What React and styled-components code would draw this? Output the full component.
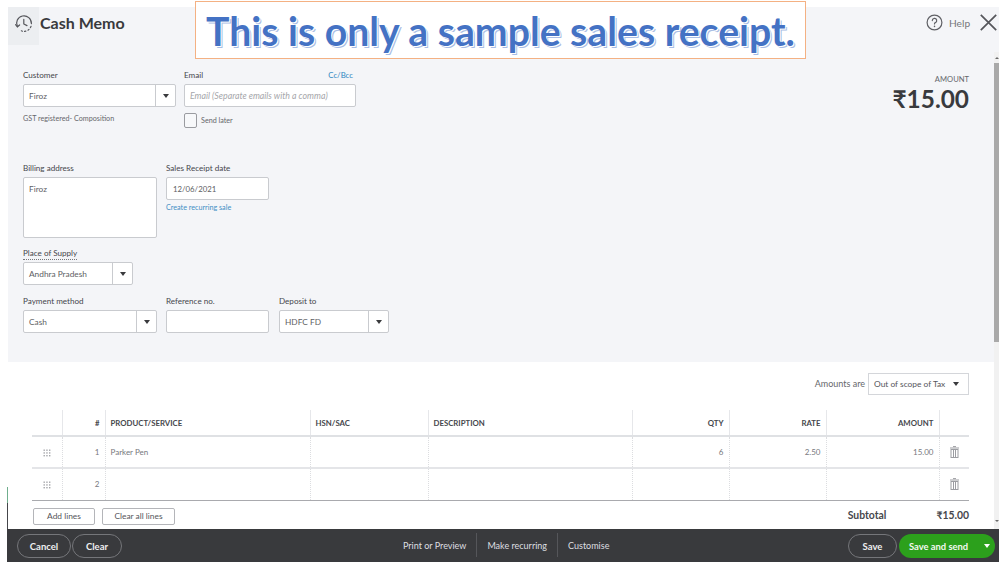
import React from 'react'
import styled, { createGlobalStyle } from 'styled-components'

const GlobalStyle = createGlobalStyle`
  html, body {
    margin: 0;
    padding: 0;
    background: #fff;
    overflow: hidden;
  }
  * {
    box-sizing: border-box;
  }
`

const columns = [30, 43, 205, 118, 204, 97, 97, 113, 30]

const HistoryIcon = () => (
  <svg width="20" height="20" viewBox="0 0 20 20" fill="none" stroke="#55565b" strokeWidth="1.2" strokeLinecap="round">
    <path d="M3.4 12.6 A7.4 7.4 0 1 1 17.4 9.6" />
    <path d="M1.6 10.6 L3.4 12.8 L5.6 11" />
    <path d="M9.8 5.4 V10 L13 11.6" />
    <path d="M17 12.4 L16.4 13.6 M15 15.4 L14 16.2 M11.8 17.2 L10.6 17.4 M8.4 17.2 L7.4 16.8" />
  </svg>
)

const HelpIcon = () => (
  <svg width="17" height="17" viewBox="0 0 17 17" fill="none" stroke="#5f6065" strokeWidth="1.2" strokeLinecap="round">
    <circle cx="8.5" cy="8.5" r="7.4" />
    <path d="M6.3 6.6 A2.2 2.2 0 1 1 9.3 8.6 C8.7 8.9 8.5 9.2 8.5 10" />
    <path d="M8.5 12.2 V12.4" strokeWidth="1.5" />
  </svg>
)

const CloseIcon = () => (
  <svg width="17" height="17" viewBox="0 0 17 17" fill="none" stroke="#55565b" strokeWidth="1.7">
    <path d="M0.8 0.8 L16.2 16.2 M16.2 0.8 L0.8 16.2" />
  </svg>
)

const GripIcon = () => (
  <svg width="8" height="8" viewBox="0 0 8 8" fill="#a4a5a9">
    {[0.5, 3.25, 6].map((y) =>
      [0.5, 3.25, 6].map((x) => <rect key={`${x}-${y}`} x={x} y={y} width="1.4" height="1.4" />)
    )}
  </svg>
)

const TrashIcon = () => (
  <svg width="9" height="12" viewBox="0 0 9 12" fill="none" stroke="#9c9da2" strokeWidth="1">
    <path d="M3 .6 H6 M0 2 H9" />
    <rect x="1" y="3.5" width="7" height="8" />
    <path d="M3.5 4 V11 M5.5 4 V11" />
  </svg>
)

const Select = ({ width, caretWidth = 20, height = 23, children }) => (
  <SelectBox $width={width} $height={height}>
    <SelectValue>{children}</SelectValue>
    <CaretCell $width={caretWidth}>
      <Caret />
    </CaretCell>
  </SelectBox>
)

const Row = ({ index, item, qty, rate, amount }) => (
  <tr>
    <BodyCell $align="center">
      <GripIcon />
    </BodyCell>
    <BodyCell $align="right">{index}</BodyCell>
    <BodyCell>{item}</BodyCell>
    <BodyCell />
    <BodyCell />
    <BodyCell $align="right">{qty}</BodyCell>
    <BodyCell $align="right">{rate}</BodyCell>
    <BodyCell $align="right">{amount}</BodyCell>
    <BodyCell $align="center">
      <TrashIcon />
    </BodyCell>
  </tr>
)

const App = () => (
  <Page>
    <GlobalStyle />
    <Banner>This is only a sample sales receipt.</Banner>
    <SideMark />
    <Scrollbar>
      <ScrollArrow />
      <ScrollThumb />
      <ScrollArrow $down />
    </Scrollbar>

    <Main>
      <FormPanel>
        <Header>
          <HeaderLeft>
            <HistoryButton>
              <HistoryIcon />
            </HistoryButton>
            <Title>Cash Memo</Title>
          </HeaderLeft>
          <HeaderRight>
            <HelpIcon />
            <HelpText>Help</HelpText>
            <CloseIcon />
          </HeaderRight>
        </Header>

        <FormBody>
          <Form>
            <FieldRow>
              <Field $width={153}>
                <Label>Customer</Label>
                <Select width={153}>Firoz</Select>
                <Hint>GST registered- Composition</Hint>
              </Field>
              <Field $width={172}>
                <LabelRow>
                  <Label>Email</Label>
                  <CcLink>Cc/Bcc</CcLink>
                </LabelRow>
                <Input $width={172} $placeholder>Email (Separate emails with a comma)</Input>
                <CheckRow>
                  <Checkbox />
                  <Hint as="span">Send later</Hint>
                </CheckRow>
              </Field>
            </FieldRow>

            <FieldRow $top={35} $gap={9}>
              <Field $width={134}>
                <Label>Billing address</Label>
                <Textarea>Firoz</Textarea>
              </Field>
              <Field $width={103}>
                <Label>Sales Receipt date</Label>
                <Input $width={103} $inset={6} $size={7.8}>12/06/2021</Input>
                <RecurringLink>Create recurring sale</RecurringLink>
              </Field>
            </FieldRow>

            <FieldRow $top={10}>
              <Field $width={110}>
                <Label $dotted>Place of Supply</Label>
                <Select width={110}>Andhra Pradesh</Select>
              </Field>
            </FieldRow>

            <FieldRow $top={11} $gap={9}>
              <Field $width={134}>
                <Label>Payment method</Label>
                <Select width={134}>Cash</Select>
              </Field>
              <Field $width={103}>
                <Label>Reference no.</Label>
                <Input $width={103} />
              </Field>
              <Field $width={110} $shift={1}>
                <Label>Deposit to</Label>
                <Select width={110}>HDFC FD</Select>
              </Field>
            </FieldRow>
          </Form>

          <AmountBlock>
            <AmountLabel>AMOUNT</AmountLabel>
            <AmountValue>₹15.00</AmountValue>
          </AmountBlock>
        </FormBody>
      </FormPanel>

      <LinesPanel>
        <TaxRow>
          <TaxLabel>Amounts are</TaxLabel>
          <TaxSelect>
            <span>Out of scope of Tax</span>
            <Caret />
          </TaxSelect>
        </TaxRow>

        <LinesTable>
          <colgroup>
            {columns.map((w, i) => (
              <col key={i} style={{ width: w }} />
            ))}
          </colgroup>
          <thead>
            <tr>
              <HeadCell />
              <HeadCell $align="right">#</HeadCell>
              <HeadCell>PRODUCT/SERVICE</HeadCell>
              <HeadCell>HSN/SAC</HeadCell>
              <HeadCell>DESCRIPTION</HeadCell>
              <HeadCell $align="right">QTY</HeadCell>
              <HeadCell $align="right">RATE</HeadCell>
              <HeadCell $align="right">AMOUNT</HeadCell>
              <HeadCell />
            </tr>
          </thead>
          <tbody>
            <Row index={1} item="Parker Pen" qty="6" rate="2.50" amount="15.00" />
            <Row index={2} />
          </tbody>
        </LinesTable>

        <LinesFooter>
          <LineButtons>
            <LineButton $width={62}>Add lines</LineButton>
            <LineButton $width={73}>Clear all lines</LineButton>
          </LineButtons>
          <Totals>
            <span>Subtotal</span>
            <span>₹15.00</span>
          </Totals>
        </LinesFooter>
      </LinesPanel>
    </Main>

    <Footer>
      <FooterGroup>
        <PillButton $width={54}>Cancel</PillButton>
        <PillButton $width={50}>Clear</PillButton>
      </FooterGroup>
      <FooterLinks>
        <FooterLink>Print or Preview</FooterLink>
        <FooterLink $divider>Make recurring</FooterLink>
        <FooterLink $divider>Customise</FooterLink>
      </FooterLinks>
      <FooterGroup $gap={2}>
        <PillButton $width={49}>Save</PillButton>
        <SendButton>
          <span>Save and send</span>
          <SendCaret />
        </SendButton>
      </FooterGroup>
    </Footer>
  </Page>
)

const Page = styled.div`
  position: relative;
  width: 999px;
  height: 562px;
  overflow: hidden;
  display: flex;
  flex-direction: column;
  padding-top: 7px;
  background: #fff;
  font-family: Lato, 'Liberation Sans', sans-serif;
  color: #4a4b50;
`

const Banner = styled.div`
  position: absolute;
  left: 195px;
  top: 1px;
  width: 611px;
  height: 58px;
  z-index: 3;
  display: flex;
  align-items: center;
  justify-content: center;
  background: #fff;
  border: 1px solid #f4b183;
  font-family: Lato, 'Liberation Sans', sans-serif;
  font-size: 39.2px;
  font-weight: 700;
  color: #4472c4;
  white-space: nowrap;
  text-shadow: 1px 1px 0 #fff, 2px 2px 0 #a9bde4;
`

const SideMark = styled.div`
  position: absolute;
  left: 7px;
  top: 487px;
  width: 1px;
  height: 42px;
  background: linear-gradient(#6fae8d 38%, #44454a 38%);
`

const Scrollbar = styled.div`
  position: absolute;
  right: 0;
  top: 52px;
  width: 5px;
  height: 477px;
  z-index: 2;
  display: flex;
  flex-direction: column;
  background: #f1f1f1;
`

const ScrollArrow = styled.div`
  height: 11px;
  flex: none;
  margin-top: ${(p) => (p.$down ? 'auto' : '0')};
  margin-bottom: ${(p) => (p.$down ? '3px' : '0')};
  display: flex;
  align-items: center;
  justify-content: center;

  &::after {
    content: '';
    border-left: 2px solid transparent;
    border-right: 2px solid transparent;
    border-${(p) => (p.$down ? 'top' : 'bottom')}: 2px solid #6a6a6a;
  }
`

const ScrollThumb = styled.div`
  height: 279px;
  flex: none;
  background: #a9a9a9;
`

const Main = styled.div`
  margin-left: 8px;
  height: 522px;
  flex: none;
  display: flex;
  flex-direction: column;
`

const FormPanel = styled.section`
  height: 355px;
  flex: none;
  background: #f4f5f8;
`

const Header = styled.header`
  display: flex;
  align-items: flex-start;
  justify-content: space-between;
  height: 38px;
`

const HeaderLeft = styled.div`
  display: flex;
  align-items: flex-start;
`

const HistoryButton = styled.div`
  width: 31px;
  height: 38px;
  display: flex;
  justify-content: center;
  padding-top: 7px;
  background: #eceef1;
`

const Title = styled.h1`
  margin: 6px 0 0 1px;
  font-size: 16px;
  line-height: 20px;
  font-weight: 700;
  color: #393a3d;
`

const HeaderRight = styled.div`
  display: flex;
  align-items: center;
  padding: 7px 2px 0 0;
`

const HelpText = styled.span`
  width: 20px;
  margin: 0 11px 0 6px;
  font-size: 10.2px;
  color: #74757a;
`

const FormBody = styled.div`
  display: flex;
  justify-content: space-between;
  padding: 25px 30px 0 15px;
`

const Form = styled.div`
  display: flex;
  flex-direction: column;
`

const FieldRow = styled.div`
  display: flex;
  gap: ${(p) => p.$gap ?? 8}px;
  margin-top: ${(p) => p.$top ?? 0}px;
`

const Field = styled.div`
  width: ${(p) => p.$width}px;
  margin-left: ${(p) => p.$shift ?? 0}px;
  display: flex;
  flex-direction: column;
`

const LabelRow = styled.div`
  display: flex;
  justify-content: space-between;
  padding-right: 3px;
`

const Label = styled.label`
  align-self: flex-start;
  height: ${(p) => (p.$dotted ? '12px' : '11px')};
  margin-bottom: ${(p) => (p.$dotted ? '2px' : '3px')};
  font-size: 8.1px;
  line-height: 11px;
  color: #46474c;
  white-space: nowrap;
  border-bottom: ${(p) => (p.$dotted ? '1px dotted #77787c' : 'none')};
`

const CcLink = styled.span`
  font-size: 7.8px;
  line-height: 11px;
  color: #2f86c1;
`

const boxBorder = `
  background: #fff;
  border: 1px solid #c9cbcf;
  border-radius: 2px;
`

const SelectBox = styled.div`
  ${boxBorder}
  width: ${(p) => p.$width}px;
  height: ${(p) => p.$height}px;
  display: flex;
  align-items: stretch;
`

const SelectValue = styled.div`
  flex: 1;
  display: flex;
  align-items: center;
  padding-left: 5px;
  font-size: 8.3px;
  color: #5d5e63;
  white-space: nowrap;
`

const CaretCell = styled.div`
  width: ${(p) => p.$width}px;
  flex: none;
  display: flex;
  align-items: center;
  justify-content: center;
  border-left: 1px solid #c9cbcf;
`

const Caret = styled.i`
  display: block;
  border-left: 3px solid transparent;
  border-right: 3px solid transparent;
  border-top: 4px solid #393a3d;
`

const Input = styled.div`
  ${boxBorder}
  width: ${(p) => p.$width}px;
  height: 23px;
  display: flex;
  align-items: center;
  padding-left: ${(p) => p.$inset ?? 5}px;
  font-size: ${(p) => (p.$placeholder ? '8.8px' : `${p.$size ?? 8.3}px`)};
  font-style: ${(p) => (p.$placeholder ? 'italic' : 'normal')};
  color: ${(p) => (p.$placeholder ? '#a5a6aa' : '#5d5e63')};
  white-space: nowrap;
`

const Textarea = styled.div`
  ${boxBorder}
  height: 61px;
  padding: 6px 5px;
  font-size: 8.3px;
  line-height: 11px;
  color: #5d5e63;
`

const Hint = styled.div`
  margin-top: 7px;
  font-size: 7.2px;
  line-height: 10px;
  color: #66676c;
  white-space: nowrap;
`

const CheckRow = styled.div`
  display: flex;
  align-items: center;
  gap: 4px;
  margin-top: 6px;
  height: 15px;

  span {
    margin-top: 1px;
  }
`

const Checkbox = styled.div`
  ${boxBorder}
  width: 13px;
  height: 15px;
  background: #f7f8fa;
  border-color: #9a9ba0;
`

const RecurringLink = styled.a`
  margin-top: 3px;
  font-size: 7.2px;
  line-height: 10px;
  color: #3f8fc5;
  white-space: nowrap;
`

const AmountBlock = styled.div`
  display: flex;
  flex-direction: column;
  align-items: flex-end;
  padding-top: 4px;
`

const AmountLabel = styled.div`
  font-size: 7.6px;
  line-height: 11px;
  color: #66676c;
`

const AmountValue = styled.div`
  margin-top: 0;
  font-size: 24.4px;
  line-height: 27px;
  font-weight: 700;
  color: #393a3d;
`

const LinesPanel = styled.section`
  flex: 1;
  padding: 11px 0 0 24px;
  background: #fff;
`

const TaxRow = styled.div`
  display: flex;
  justify-content: flex-end;
  align-items: center;
  gap: 3px;
  width: 937px;
`

const TaxLabel = styled.span`
  font-size: 9px;
  color: #66676c;
  margin-top: -2px;
`

const TaxSelect = styled.div`
  width: 101px;
  height: 22px;
  display: flex;
  align-items: center;
  justify-content: space-between;
  padding: 0 9px 0 5px;
  background: #fff;
  border: 1px solid #d4d6da;
  font-size: 8.4px;
  color: #55565b;
  white-space: nowrap;
`

const LinesTable = styled.table`
  width: 937px;
  margin-top: 15px;
  table-layout: fixed;
  border-collapse: collapse;
`

const HeadCell = styled.th`
  height: 26px;
  padding: 0 5px;
  text-align: ${(p) => p.$align ?? 'left'};
  font-size: 7.8px;
  font-weight: 700;
  color: #46474c;
  white-space: nowrap;
  border-bottom: 2px solid #dfe1e4;
  border-left: 1px solid #e6e7ea;

  &:first-child {
    border-left: none;
  }
`

const BodyCell = styled.td`
  height: 32px;
  padding: 0 5px;
  text-align: ${(p) => p.$align ?? 'left'};
  font-size: 8px;
  color: #77787d;
  border-bottom: 2px solid #e4e5e8;
  border-left: 1px dotted #dcdde0;

  &:first-child {
    border-left: none;
  }

  tr:last-child & {
    border-bottom: 1px solid #a9aaae;
  }

  svg {
    display: inline-block;
    vertical-align: middle;
  }
`

const LinesFooter = styled.div`
  display: flex;
  justify-content: space-between;
  width: 937px;
  padding: 7px 0 0 1px;
`

const LineButtons = styled.div`
  display: flex;
  gap: 7px;
`

const LineButton = styled.button`
  width: ${(p) => p.$width}px;
  height: 17px;
  padding: 0;
  background: #fff;
  border: 1px solid #b4b5b9;
  border-radius: 2px;
  font-family: inherit;
  font-size: 8.4px;
  color: #55565b;
`

const Totals = styled.div`
  display: flex;
  gap: 50px;
  font-size: 10.4px;
  line-height: 14px;
  font-weight: 700;
  color: #46474c;
`

const Footer = styled.footer`
  position: relative;
  margin-left: 7px;
  flex: 1;
  display: flex;
  align-items: center;
  justify-content: space-between;
  padding: 1px 4px 0 10px;
  background: #393a3d;
`

const FooterGroup = styled.div`
  display: flex;
  gap: ${(p) => p.$gap ?? 1}px;
`

const PillButton = styled.button`
  width: ${(p) => p.$width}px;
  height: 24px;
  padding: 0;
  background: transparent;
  border: 1px solid #75767a;
  border-radius: 12px;
  font-family: inherit;
  font-size: 9.5px;
  font-weight: 700;
  color: #eeeeef;
`

const FooterLinks = styled.nav`
  position: absolute;
  left: 396px;
  top: 4px;
  height: 24px;
  display: flex;
  align-items: center;
`

const FooterLink = styled.span`
  display: flex;
  align-items: center;
  height: 24px;
  padding: 0 10px 0 ${(p) => (p.$divider ? '10px' : '0')};
  font-size: 9px;
  color: #dedfe0;
  white-space: nowrap;
  border-left: ${(p) => (p.$divider ? '1px solid #55565a' : 'none')};
`

const SendButton = styled.button`
  width: 96px;
  height: 24px;
  display: flex;
  align-items: center;
  justify-content: space-between;
  padding: 0 5px 0 10px;
  background: #2ca01c;
  border: none;
  border-radius: 12px;
  font-family: inherit;
  font-size: 9.4px;
  font-weight: 700;
  color: #f2f8f0;
  white-space: nowrap;
`

const SendCaret = styled.i`
  display: block;
  border-left: 3.5px solid transparent;
  border-right: 3.5px solid transparent;
  border-top: 4px solid #fff;
`

export default App
